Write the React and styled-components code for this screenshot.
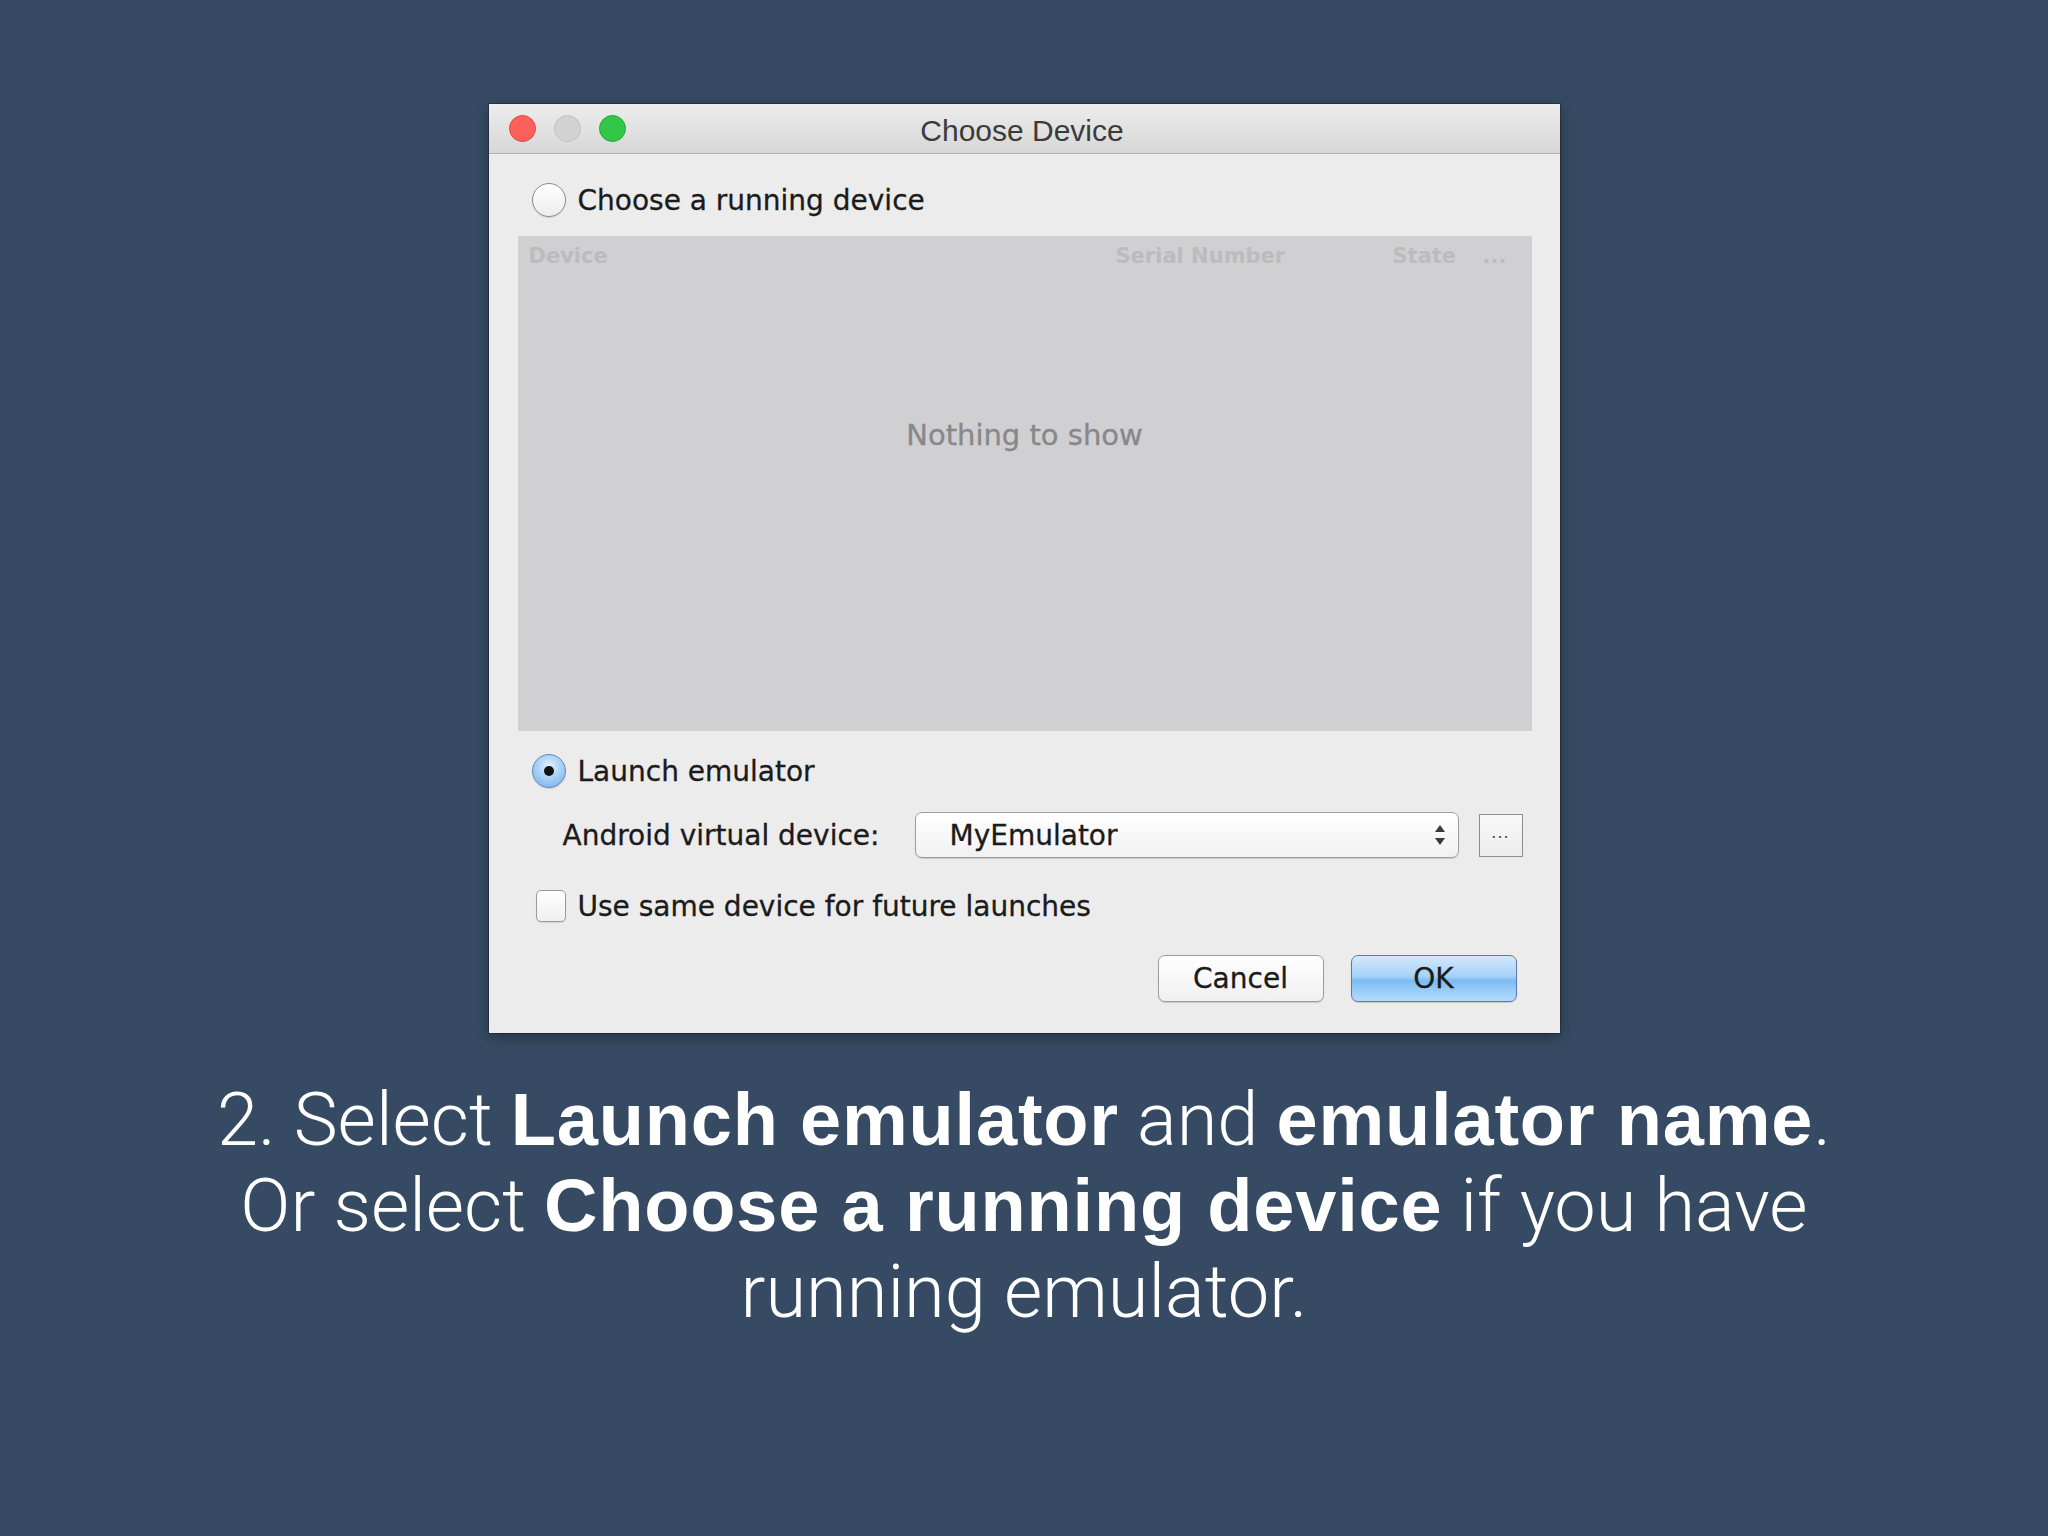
import React from "react";
import styled, { createGlobalStyle } from "styled-components";

const GlobalStyle = createGlobalStyle`
  html, body {
    margin: 0;
    padding: 0;
    background: #364b63;
  }
  * {
    box-sizing: border-box;
  }
`;

const Page = styled.div`
  width: 2048px;
  height: 1536px;
  display: flex;
  flex-direction: column;
  align-items: center;
  padding-top: 104px;
  background: #364b63;
`;

const Dialog = styled.div`
  width: 1071px;
  height: 929px;
  background: #ececec;
  box-shadow: 0 0 0 1px rgba(0, 0, 0, 0.25), 0 4px 14px rgba(0, 0, 0, 0.35);
  display: flex;
  flex-direction: column;
  font-family: "DejaVu Sans", Verdana, sans-serif;
  color: #1b1b1b;
`;

const TitleBar = styled.div`
  height: 50px;
  display: grid;
  grid-template-columns: 1fr auto 1fr;
  align-items: center;
  background: linear-gradient(#ededed, #d7d7d7);
  border-bottom: 1px solid #b1b1b1;
`;

const Lights = styled.div`
  display: flex;
  gap: 18px;
  padding-left: 20px;
`;

const Light = styled.span`
  width: 27px;
  height: 27px;
  border-radius: 50%;
  background: ${(p) => p.$fill};
  border: 1px solid ${(p) => p.$edge};
`;

const Title = styled.div`
  font-family: "Liberation Sans", Arial, sans-serif;
  font-size: 30px;
  color: #3b3b3b;
  padding-top: 4px;
  padding-right: 4px;
`;

const Body = styled.div`
  flex: 1;
  display: flex;
  flex-direction: column;
  padding: 29px 28px 31px 29px;
`;

const OptionRow = styled.label`
  display: flex;
  align-items: center;
  gap: 12px;
  padding-left: ${(p) => p.$indent || 14}px;
  margin-top: ${(p) => p.$top || 0}px;
  height: 34px;
  font-size: 28px;
  -webkit-text-stroke: 0.3px #1b1b1b;
`;

const Radio = styled.span`
  width: 34px;
  height: 34px;
  border-radius: 50%;
  display: flex;
  align-items: center;
  justify-content: center;
  border: 1px solid ${(p) => (p.$checked ? "#6b86b3" : "#8c8c8c")};
  background: ${(p) =>
    p.$checked
      ? "radial-gradient(circle at 50% 35%, #e2f0fd 0%, #a9d1f6 45%, #6eaeea 100%)"
      : "linear-gradient(#ffffff, #ececec)"};
  box-shadow: 0 1px 1px rgba(0, 0, 0, 0.12);

  &::after {
    content: "";
    display: ${(p) => (p.$checked ? "block" : "none")};
    width: 10px;
    height: 10px;
    border-radius: 50%;
    background: #111;
  }
`;

const Checkbox = styled.span`
  width: 30px;
  height: 32px;
  margin-left: 2px;
  border-radius: 5px;
  border: 1px solid #9a9a9a;
  background: linear-gradient(#ffffff, #efefef);
  box-shadow: 0 1px 1px rgba(0, 0, 0, 0.1);
`;

const Table = styled.div`
  margin-top: 19px;
  height: 495px;
  background: #d0cfd1;
  display: flex;
  flex-direction: column;
`;

const HeaderRow = styled.div`
  display: grid;
  grid-template-columns: 1fr 277px 90px 26px;
  align-items: center;
  height: 40px;
  padding: 0 23px 0 11px;
  font-size: 21px;
  font-weight: bold;
  color: #bcbbbe;
`;

const Empty = styled.div`
  padding-top: 142px;
  text-align: center;
  font-size: 29px;
  color: #88878b;
  -webkit-text-stroke: 0.3px #88878b;
`;

const AvdRow = styled.div`
  display: flex;
  align-items: center;
  margin-top: 24px;
  padding-left: 45px;
  height: 46px;
  font-size: 28px;
  -webkit-text-stroke: 0.3px #1b1b1b;
`;

const AvdLabel = styled.span`
  width: 352px;
`;

const Select = styled.div`
  width: 544px;
  height: 46px;
  display: flex;
  align-items: center;
  justify-content: space-between;
  padding: 0 12px 0 34px;
  border: 1px solid #9e9e9e;
  border-radius: 7px;
  background: linear-gradient(#ffffff, #f1f1f1);
  box-shadow: 0 1px 1px rgba(0, 0, 0, 0.15);
`;

const Arrows = styled.svg`
  width: 12px;
  height: 26px;
`;

const MoreButton = styled.div`
  width: 44px;
  height: 43px;
  margin-left: 20px;
  border: 1px solid #8e8e8e;
  background: linear-gradient(#f8f8f8, #ececec);
  display: flex;
  align-items: center;
  justify-content: center;
  font-size: 16px;
  color: #444;
  letter-spacing: 1px;
  padding-bottom: 6px;
  -webkit-text-stroke: 0;
`;

const Buttons = styled.div`
  margin-top: auto;
  display: flex;
  justify-content: flex-end;
  gap: 27px;
  padding-right: 15px;
`;

const Button = styled.div`
  width: 166px;
  height: 47px;
  display: flex;
  align-items: center;
  justify-content: center;
  font-size: 28px;
  -webkit-text-stroke: 0.3px #1b1b1b;
  border-radius: 7px;
  border: 1px solid ${(p) => (p.$primary ? "#5b79b0" : "#9c9c9c")};
  background: ${(p) =>
    p.$primary
      ? "linear-gradient(#d4e8fb 0%, #a6d2f8 45%, #7cbcf3 55%, #b6dcfb 100%)"
      : "linear-gradient(#ffffff, #f0f0f0)"};
  box-shadow: 0 1px 1px rgba(0, 0, 0, 0.15);
`;

const Caption = styled.div`
  margin-top: 44px;
  text-align: center;
  font-family: Roboto, "Liberation Sans", Arial, sans-serif;
  font-weight: 300;
  font-size: 74px;
  line-height: 86px;
  color: #ffffff;

  b {
    font-family: "Liberation Sans", Arial, sans-serif;
    font-weight: 700;
    font-size: 74px;
    letter-spacing: 0.8px;
  }
`;

export default function App() {
  return (
    <>
      <GlobalStyle />
      <Page>
        <Dialog>
          <TitleBar>
            <Lights>
              <Light $fill="#fc605b" $edge="#e0473f" />
              <Light $fill="#d2d2d2" $edge="#c0c0c0" />
              <Light $fill="#33c748" $edge="#23a834" />
            </Lights>
            <Title>Choose Device</Title>
            <div />
          </TitleBar>
          <Body>
            <OptionRow>
              <Radio />
              Choose a running device
            </OptionRow>
            <Table>
              <HeaderRow>
                <span>Device</span>
                <span>Serial Number</span>
                <span>State</span>
                <span>...</span>
              </HeaderRow>
              <Empty>Nothing to show</Empty>
            </Table>
            <OptionRow $top={23}>
              <Radio $checked />
              Launch emulator
            </OptionRow>
            <AvdRow>
              <AvdLabel>Android virtual device:</AvdLabel>
              <Select>
                <span>MyEmulator</span>
                <Arrows viewBox="0 0 12 26">
                  <path d="M6 3 L11 10 L1 10 Z" fill="#3a3a3a" />
                  <path d="M6 23 L11 16 L1 16 Z" fill="#3a3a3a" />
                </Arrows>
              </Select>
              <MoreButton>...</MoreButton>
            </AvdRow>
            <OptionRow $top={31} $indent={16}>
              <Checkbox />
              Use same device for future launches
            </OptionRow>
            <Buttons>
              <Button>Cancel</Button>
              <Button $primary>OK</Button>
            </Buttons>
          </Body>
        </Dialog>
        <Caption>
          2. Select <b>Launch emulator</b> and <b>emulator name</b>.
          <br />
          Or select <b>Choose a running device</b> if you have
          <br />
          running emulator.
        </Caption>
      </Page>
    </>
  );
}
